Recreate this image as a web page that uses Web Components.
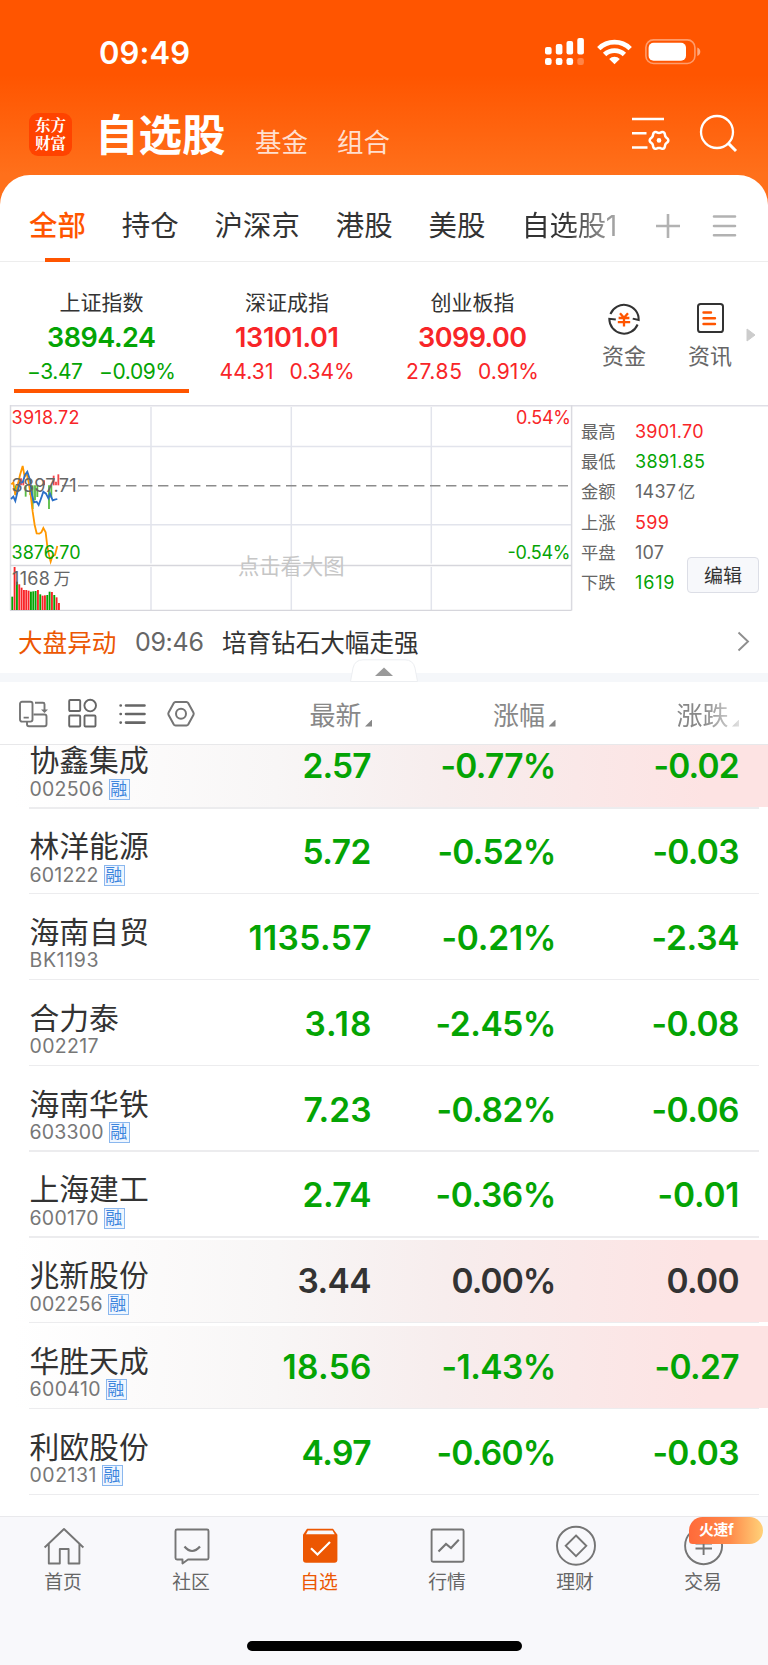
<!DOCTYPE html>
<html lang="zh-CN">
<head>
<meta charset="utf-8">
<title>自选股</title>
<style>
body {
    margin: 0;
    width: 768px;
    height: 1665px;
    overflow: hidden;
    background: #fff;
    color: #333;
    font-family: Inter, "Noto Sans CJK SC", sans-serif;
}
</style>
</head>
<body>
<stock-app></stock-app>

<script>
const UP = "#f82528"
const DOWN = "#04a404"

function define(name, html) {
    customElements.define(name, class extends HTMLElement {
        constructor() {
            super();
            this.attachShadow({mode: "open"});
        }

        connectedCallback() {
            this.shadowRoot.innerHTML = typeof html === "function" ? html(this) : html;
        }
    })
}

// Spreads its text over a given width with letter-spacing
class FitText extends HTMLElement {
    constructor() {
        super();
        this.attachShadow({mode: "open"});
        this.shadowRoot.innerHTML = `<style>
:host { display: inline-block; white-space: pre; }
</style><slot></slot>`
    }

    connectedCallback() {
        const target = Number(this.getAttribute("w"))
        if (!target) return
        const spacing = (target - this.getBoundingClientRect().width) / (this.textContent.length - 1)
        this.style.letterSpacing = `${spacing}px`
        this.style.marginRight = `${-spacing}px`
    }
}
customElements.define("fit-text", FitText)

function gear(cx, cy, r, depth) {
    const points = []
    for (let a = 0; a < 360; a += 6) {
        const t = a * Math.PI / 180
        const k = r + depth * Math.cos(6 * t)
        points.push(`${(cx + k * Math.cos(t)).toFixed(1)},${(cy + k * Math.sin(t)).toFixed(1)}`)
    }
    return `M${points.join("L")}Z`
}

const ICONS = {
    signal: [34, 28, `<g fill="#fff"><rect x="0" y="9" width="6.6" height="7.5" rx="2"/><rect x="10.8" y="6" width="6.6" height="10.5" rx="2"/><rect x="21.5" y="3" width="6.6" height="13.5" rx="2"/><rect x="32.3" y="0" width="6.6" height="16.5" rx="2"/><rect x="0" y="20" width="6.6" height="7" rx="2.2"/><rect x="10.8" y="20" width="6.6" height="7" rx="2.2"/><rect x="21.5" y="20" width="6.6" height="7" rx="2.2"/><rect x="32.3" y="20" width="6.6" height="7" rx="2.2" opacity=".28"/></g>`],
    wifi: [35, 26, `<g fill="none" stroke="#fff" stroke-width="4.8"><path d="M1.8 9.6a22.5 22.5 0 0 1 31.4 0"/><path d="M7.6 15.6a14.3 14.3 0 0 1 19.8 0"/></g><path d="M17.5 25.2l-5.3-5.2a7.6 7.6 0 0 1 10.6 0z" fill="#fff"/>`],
    battery: [56, 26, `<rect x=".9" y=".9" width="49" height="23.6" rx="7.6" fill="none" stroke="#fff" stroke-opacity=".42" stroke-width="1.6"/><rect x="3.6" y="3.7" width="37.4" height="18" rx="5" fill="#fff"/><path d="M52.3 8.6c4 1.6 4 6.8 0 8.4z" fill="#fff" fill-opacity=".5"/>`],
    filter: [38, 34, `<g fill="none" stroke="#fff" stroke-width="2.5"><path d="M0 2h32M0 16.2h14.5M0 30.6h15.5"/><path d="${gear(27, 23.4, 8.4, .9)}" stroke-linejoin="round"/></g><circle cx="27" cy="23.4" r="2.3" fill="#fff"/>`],
    search: [38, 38, `<g fill="none" stroke="#fff" stroke-width="2.3"><circle cx="17" cy="17" r="16"/><path d="M28.4 28.4l7.6 7.6" stroke-width="3"/></g>`],
    plus: [24, 24, `<path d="M0 12h24M12 0v24" stroke="#b2b2b2" stroke-width="2.6"/>`],
    menu: [23, 24, `<path d="M1 2.5h21M1 12h21M1 21.3h21" stroke="#b2b2b2" stroke-width="2.6" stroke-linecap="round"/>`],
    fund: [32, 32, `<g fill="none" stroke="#333" stroke-width="2"><path d="M2.4 11A14.7 14.7 0 0 1 30.7 17l-6-1.4M29.6 21.5A14.7 14.7 0 0 1 1.3 15.8l6.5.8"/></g><path d="M12 10.2l4 4.6 4-4.6M16 14.5v9M10.6 15h10.8M9.8 19.2h12.4" fill="none" stroke="#ff5500" stroke-width="2.3"/>`],
    news: [27, 30, `<rect x="1" y="1" width="25" height="28" rx="2.6" fill="none" stroke="#333" stroke-width="2"/><path d="M6.5 9.5h7.5M6.5 15.2h11.5M6.5 21h11.5" stroke="#ff5500" stroke-width="2.4" stroke-linecap="round"/>`],
    more: [10, 14, `<path d="M1 1v12l8-6z" fill="#ccc" stroke="#ccc" stroke-linejoin="round"/>`],
    chevron: [13, 21, `<path d="M1.5 1.5l9.5 9-9.5 9" fill="none" stroke="#8e8e8e" stroke-width="1.9"/>`],
    rotate: [29, 28, `<g fill="none" stroke="#757575" stroke-width="1.9"><rect x="1" y="1.8" width="12.5" height="19.8" rx="2"/><path d="M14.5 14.5h11a2 2 0 0 1 2 2v7.7a2 2 0 0 1-2 2h-15.5a2 2 0 0 1-2-2v-2.5M4.6 17.6h5.2M16 2.8h8a1.5 1.5 0 0 1 1.5 1.5v6"/></g><path d="M22 9.5h7l-3.5 3.5z" fill="#757575"/>`],
    grid: [29, 29, `<g fill="none" stroke="#666" stroke-width="1.9"><rect x="1.2" y="1" width="11" height="11" rx="1"/><circle cx="22.2" cy="6.6" r="5.8"/><rect x="1.2" y="16.5" width="11" height="11" rx="1"/><rect x="16.5" y="16.5" width="11" height="11" rx="1"/></g>`],
    list: [27, 24, `<path d="M7 3.5h18.5M7 12h18.5M7 20.6h18.5M1.6 3.5h.2M1.6 12h.2M1.6 20.6h.2" stroke="#666" stroke-width="2.6" stroke-linecap="round"/>`],
    hex: [28, 26, `<g fill="none" stroke="#757575" stroke-width="2"><path d="M8.5 1h11a2 2 0 0 1 1.7 1l5.2 9.6a2.5 2.5 0 0 1 0 2.4l-5.2 9.6a2 2 0 0 1-1.7 1h-11a2 2 0 0 1-1.7-1l-5.2-9.6a2.5 2.5 0 0 1 0-2.4l5.2-9.6a2 2 0 0 1 1.7-1z"/><circle cx="14" cy="12.8" r="5"/></g>`],
    home: [42, 42, `<g fill="none" stroke="#757575" stroke-width="1.9" stroke-linejoin="round"><path d="M1.6 21.5L21 3l19.4 18.5M5.8 18v19.5h11v-14.5h8.8v14.5h10.8v-19.5"/></g>`],
    chat: [42, 42, `<g fill="none" stroke="#757575" stroke-width="1.9" stroke-linejoin="round"><path d="M6 3.5h30a1.5 1.5 0 0 1 1.5 1.5v27a1.5 1.5 0 0 1-1.5 1.5h-19l-5.5 4v-4h-5.5a1.5 1.5 0 0 1-1.5-1.5v-27a1.5 1.5 0 0 1 1.5-1.5z"/><path d="M13.5 20.5q7.5 9 15.5 0" stroke-width="2.2"/></g>`],
    check: [42, 42, `<path d="M8 2.8h26l4.4 6v25a3 3 0 0 1-3 3h-28.4a3 3 0 0 1-3-3v-25z" fill="#ec5702"/><path d="M9 4.6h24.5l2.2 3.6h-28.7z" fill="#f8f8fb"/><path d="M12 22.2l6.5 6.3 12.5-12.5" fill="none" stroke="#fff" stroke-width="2.2"/>`],
    trend: [42, 42, `<g fill="none" stroke="#757575" stroke-width="1.9"><rect x="4.6" y="3.5" width="32" height="32.3" rx="1.5"/><path d="M11.5 25.5l7.5-7.5 5 4 7.8-8.2" stroke-width="2.1"/></g>`],
    wealth: [42, 42, `<g fill="none" stroke="#757575" stroke-width="1.9"><circle cx="21" cy="19.7" r="19"/><path d="M21 9.5l10.3 10.3L21 30.1 10.7 19.8z"/></g>`],
    trade: [42, 42, `<g fill="none" stroke="#757575" stroke-width="1.9"><circle cx="20.6" cy="19.7" r="18.5"/><path d="M14 10l6.6 6.5 6.6-6.5M12.5 17.5h16.5M12.5 22.5h16.5M20.6 16.5v12.5"/></g>`],
}

define("app-icon", el => {
    const [w, h, body] = ICONS[el.getAttribute("name")]
    return `<style>
:host { display: block; flex: none; }
svg { display: block; overflow: visible; }
</style><svg width="${w}" height="${h}" viewBox="0 0 ${w} ${h}">${body}</svg>`
})

define("status-bar", `<style>
:host {
    display: flex;
    align-items: center;
    height: 103px;
    padding: 0 67px 0 99px;
    color: #fff;
}
fit-text { font-size: 31px; font-weight: 600; margin-top: 2px; }
.icons { display: flex; align-items: center; margin-left: auto; }
app-icon[name=signal] { margin-right: 18px; }
app-icon[name=wifi] { margin-right: 13px; }
</style>
<fit-text w="91">09:49</fit-text>
<div class="icons"><app-icon name="signal"></app-icon><app-icon name="wifi"></app-icon><app-icon name="battery"></app-icon></div>`)

define("app-header", `<style>
:host {
    display: block;
    height: 215px;
    background: linear-gradient(#ff5500 0, #ff5500 75px, #ff701b 175px, #ff701b);
    color: #fff;
}
.bar { display: flex; height: 63px; padding: 0 30px 0 29px; align-items: center; }
.logo {
    width: 43px;
    height: 43px;
    border-radius: 9px;
    background: #ff4300;
    font: 700 15.5px/18px "Liberation Serif", "Noto Serif CJK SC", "Noto Sans CJK SC", serif;
    text-align: center;
    box-sizing: border-box;
    padding-top: 4px;
}
.logo span { display: block; }
.titles { display: flex; align-items: baseline; margin: -3px auto 0 23px; }
h1 { margin: 0 29.5px 0 0; font-size: 43.5px; font-weight: 700; transform: translateY(-1.5px); }
.sub { font-size: 26.5px; margin-right: 29px; color: #ffdfcf; }
app-icon[name=filter] { margin-right: 30px; }
.bar app-icon { margin-top: -1px; }
</style>
<status-bar></status-bar>
<div class="bar">
    <div class="logo"><span>东方</span><span>财富</span></div>
    <div class="titles">
        <h1>自选股</h1><span class="sub">基金</span><span class="sub">组合</span>
    </div>
    <app-icon name="filter"></app-icon><app-icon name="search"></app-icon>
</div>`)

define("group-tabs", `<style>
:host {
    display: flex;
    height: 86px;
    padding: 0 32px 0 29px;
    align-items: center;
    border-bottom: 1px solid #ededed;
    font-size: 28.4px;
}
.tab { flex: none; line-height: 86px; margin-top: 16px; margin-right: 36px; }
.active {
    color: #ff5500;
    font-weight: 500;
    background: linear-gradient(#ff5500, #ff5500) center 75px / 25px 4px no-repeat;
}
.last {
    margin-right: 0;
    color: transparent;
    background: linear-gradient(90deg, #333 45%, #aaa 100%);
    -webkit-background-clip: text;
    background-clip: text;
}
app-icon { margin-top: 15px; }
app-icon[name=plus] { margin-left: auto; margin-right: 33px; }
</style>
<span class="tab active">全部</span>
<span class="tab">持仓</span>
<span class="tab">沪深京</span>
<span class="tab">港股</span>
<span class="tab">美股</span>
<span class="tab last"><fit-text w="96">自选股1</fit-text></span>
<app-icon name="plus"></app-icon>
<app-icon name="menu"></app-icon>`)

define("index-quote", el => {
    const [name, value, diff, pct] = el.getAttribute("data").split(",")
    const [w1, w2, w3] = el.getAttribute("widths").split(",")
    return `<style>
:host {
    display: grid;
    flex: none;
    grid-template-rows: 34px 36px 32px;
    align-content: start;
    justify-items: center;
    width: 175px;
    height: 103px;
    padding-top: 23.5px;
    margin-right: 10.5px;
    border-bottom: 4px solid transparent;
    color: ${UP};
    line-height: 34px;
}
:host([down]) { color: ${DOWN}; }
:host([active]) { border-color: #ff5500; }
.name { color: #333; font-size: 21px; }
.value { font-size: 27px; font-weight: 600; line-height: 36px; }
.change { display: flex; gap: 16px; font-size: 21px; line-height: 32px; }
</style>
<span class="name">${name}</span>
<fit-text class="value" w="${w1}">${value}</fit-text>
<span class="change"><fit-text w="${w2}">${diff}</fit-text><fit-text w="${w3}">${pct}</fit-text></span>`
})

define("quick-link", `<style>
:host {
    display: flex;
    flex: none;
    flex-direction: column;
    align-items: center;
    width: 86px;
    padding-top: 41px;
    font-size: 22px;
    line-height: 30px;
    color: #666;
}
.icon { height: 38px; }
</style><div class="icon"><slot name="icon"></slot></div><slot></slot>`)

define("index-strip", `<style>
:host { display: flex; height: 142px; padding-left: 14px; }
.more { padding-top: 66px; margin-left: -7px; }
quick-link:first-of-type { margin-left: 10.5px; }
</style>
<index-quote active down data="上证指数,3894.24,−3.47,−0.09%" widths="109,56,77"></index-quote>
<index-quote data="深证成指,13101.01,44.31,0.34%" widths="104,54,65"></index-quote>
<index-quote data="创业板指,3099.00,27.85,0.91%" widths="109,56,61"></index-quote>
<quick-link><app-icon slot="icon" name="fund"></app-icon>资金</quick-link>
<quick-link><app-icon slot="icon" name="news"></app-icon>资讯</quick-link>
<div class="more"><app-icon name="more"></app-icon></div>`)

// Volume bars: top edge and colour, 7 units apart
const VOLUME = "605g 516r 560g 568r 578r 585r 585r 587r 590g 589g 588g 585r 598g 602r 601r 600g 590g 591r 600g 607r 624r".split(" ")
const STRENGTH = [[47, 300], [56, 262], [63, 250], [70, 258], [77, 305], [91, 300], [98, 342], [105, 316], [112, 306], [132, 256], [147, 342], [154, 308], [161, 242], [168, 260], [175, 238]]

define("minute-chart", () => {
    const volume = VOLUME.map((v, i) => {
        const y = parseInt(v)
        return `<rect x="${34 + i * 7}" y="${y}" width="5.6" height="${645 - y}" fill="${v.endsWith("g") ? DOWN : UP}"/>`
    }).join("")
    const strength = STRENGTH.map(([x, y]) =>
        `<path d="M${x} 271V${y}" stroke="${y > 271 ? "#59bd45" : "#f4454a"}" stroke-width="5.5"/>`
    ).join("")
    return `<style>
:host { display: block; flex: none; width: 573px; height: 207px; }
svg { display: block; }
text { font-size: 18px; }
</style>
<svg width="573" height="207" viewBox="0 404 573 207">
    <g fill="none" stroke="#e2e4ec" stroke-width="1.5">
        <path d="M11 446.5H571M11 524.7H571M151 407V563.5M291.3 407V563.5M431.3 407V563.5M151 567V610M291.3 567V610M431.3 567V610"/>
        <path d="M571.6 405V610.5M10.5 405V610.5" stroke="#dadae0"/>
        <path d="M10 565.5H571.5M10 610.4H571.5" stroke="#d6d6dc"/>
    </g>
    <text x="238" y="573.5" fill="#c6c6c6" style="font-size:21.3px">点击看大图</text>
    <g transform="translate(0 395) scale(.33333)" fill="none">
        ${strength}${volume}
        <path d="M34 268L40 262 46 300 55 262 60 240 68 213 74 245 80 235 86 262 92 300 98 350 104 390 110 415 118 416 124 412 130 399 137 412 142 455 147 480 152 500 157 484 165 480 172 453" stroke="#ff9800" stroke-width="5.4"/>
        <path d="M33 312L40 305 46 318 55 280 60 262 68 262 75 240 82 230 90 255 96 300 102 322 110 320 116 330 124 308 130 290 138 296 145 310 150 296 158 316 164 314 172 312" stroke="#2b6fc8" stroke-width="5.4"/>
    </g>
    <path d="M62 485.7H568" stroke="#8c8c8c" stroke-width="1.6" stroke-dasharray="10.4 5.6"/>
    <g fill="#666">
        <text x="11.5" y="491.5" textLength="65">3897.71</text>
        <text x="12" y="585" textLength="38">1168</text><text x="53.5" y="585" style="font-size:17px">万</text>
    </g>
    <g fill="${UP}">
        <text x="11.5" y="423.5" textLength="68">3918.72</text>
        <text x="516" y="423.5" textLength="55">0.54%</text>
    </g>
    <g fill="${DOWN}">
        <text x="11.5" y="559" textLength="69">3876.70</text>
        <text x="507.5" y="559" textLength="63">-0.54%</text>
    </g>
</svg>`
})

define("market-stats", `<style>
:host {
    display: grid;
    grid-template-columns: 54px 1fr;
    grid-auto-rows: 30.4px;
    align-content: start;
    flex: 1;
    padding: 12.5px 0 0 8px;
    font-size: 18px;
    line-height: 30.4px;
    color: #666;
    position: relative;
}
.up { color: ${UP}; }
.down { color: ${DOWN}; }
.label { font-size: 17.3px; }
.unit { font-size: 17.3px; margin-left: 2px; }
button {
    position: absolute;
    left: 114px;
    top: 153px;
    width: 72px;
    height: 36px;
    padding: 0 0 2px;
    border: 1px solid #dcdee6;
    border-radius: 4px;
    background: #f7f8fb;
    color: #333;
    font: 19px Inter, "Noto Sans CJK SC", sans-serif;
}
</style>
<span class="label">最高</span><span class="up"><fit-text w="68.5">3901.70</fit-text></span>
<span class="label">最低</span><span class="down"><fit-text w="70">3891.85</fit-text></span>
<span class="label">金额</span><span><fit-text w="41">1437</fit-text><span class="unit">亿</span></span>
<span class="label">上涨</span><span class="up"><fit-text w="34">599</fit-text></span>
<span class="label">平盘</span><span><fit-text w="29">107</fit-text></span>
<span class="label">下跌</span><span class="down"><fit-text w="39.5">1619</fit-text></span>
<button>编辑</button>`)

define("market-panel", `<style>
:host { display: flex; height: 207px; background: linear-gradient(#dfdfe6, #dfdfe6) 10px .5px / 100% 1.5px no-repeat; }
</style><minute-chart></minute-chart><market-stats></market-stats>`)

define("news-line", `<style>
:host {
    display: flex;
    align-items: center;
    height: 60px;
    padding: 0 18px 2px 18px;
    font-size: 24.6px;
    position: relative;
    border-bottom: 9px solid #f5f7fa;
}
.tag { color: #ec5702; }
.time { color: #666; margin: 2px 18px 0 18.5px; font-size: 25px; }
app-icon { margin-left: auto; }
.handle { position: absolute; left: 350px; top: 47.5px; }
</style>
<span class="tag">大盘异动</span>
<span class="time"><fit-text w="69">09:46</fit-text></span>
<span>培育钻石大幅走强</span>
<app-icon name="chevron"></app-icon>
<svg class="handle" width="68" height="24"><path d="M.5 22.5L3 9Q5 .8 13 .8H55Q63 .8 65 9L67.5 22.5Z" fill="#fff" stroke="#eceef1" stroke-width="1"/><path d="M25 17L34 8.5 43 17Z" fill="#999"/></svg>`)

define("list-toolbar", `<style>
:host {
    display: flex;
    align-items: center;
    height: 62px;
    padding-left: 19px;
    border-bottom: 1px solid #e8e8ea;
    color: #888;
    font-size: 26px;
}
app-icon { margin-top: 1px; }
app-icon[name=grid] { margin-left: 20px; }
app-icon[name=list] { margin-left: 21.5px; }
app-icon[name=hex] { margin-left: 21.5px; }
.col { display: flex; align-items: center; width: 183.5px; justify-content: flex-end; }
.col i { width: 7px; height: 7px; margin: 20px 0 0 3.5px; background: #888; clip-path: polygon(100% 0, 100% 100%, 0 100%); }
.first { margin-left: -6.5px; }
.last { -webkit-mask: linear-gradient(90deg, #000 80%, #0004); mask: linear-gradient(90deg, #000 80%, #0004); }
</style>
<app-icon name="rotate"></app-icon><app-icon name="grid"></app-icon><app-icon name="list"></app-icon><app-icon name="hex"></app-icon>
<span class="col first">最新<i></i></span>
<span class="col">涨幅<i></i></span>
<span class="col last">涨跌<i></i></span>`)

// name, code, code width, margin trading, price, change %, change, widths of the three values
const STOCKS = [
    ["协鑫集成", "002506", 74, true, "2.57", "-0.77%", "-0.02", 69, 116, 86, "hot scrolled"],
    ["林洋能源", "601222", 69, true, "5.72", "-0.52%", "-0.03", 69, 119, 87],
    ["海南自贸", "BK1193", 69, false, "1135.57", "-0.21%", "-2.34", 123, 115, 88],
    ["合力泰", "002217", 69, false, "3.18", "-2.45%", "-0.08", 67, 121, 88],
    ["海南华铁", "603300", 74, true, "7.23", "-0.82%", "-0.06", 68, 120, 88],
    ["上海建工", "600170", 69, true, "2.74", "-0.36%", "-0.01", 69, 121, 82],
    ["兆新股份", "002256", 73, true, "3.44", "0.00%", "0.00", 74, 105, 73, "hot flat"],
    ["华胜天成", "600410", 71, true, "18.56", "-1.43%", "-0.27", 89, 115, 85, "hot"],
    ["利欧股份", "002131", 67, true, "4.97", "-0.60%", "-0.03", 70, 120, 87],
]

define("stock-row", el => {
    const [name, code, codeWidth, margin, price, pct, diff, w1, w2, w3] = STOCKS[el.getAttribute("index")]
    return `<style>
:host {
    display: block;
    flex: none;
    height: 85.8px;
    color: ${DOWN};
}
:host(.flat) { color: #333; }
.band {
    display: grid;
    grid-template-columns: 189px 153px 185px 183px;
    height: 81.8px;
    padding-left: 29.5px;
    border: solid #fff;
    border-width: 2px 0 0;
}
:host(.hot) .band { background: linear-gradient(92deg, #fff 2%, #f8f6f6 36%, #f7eded 58%, #fde3e3 92%); }
.name { display: block; color: #333; font-size: 29.8px; line-height: 40px; margin-top: 15px; }
.code { display: flex; align-items: center; gap: 5px; height: 22px; margin-top: -2px; color: #777; font-size: 19.5px; line-height: 21px; }
.code b {
    box-sizing: border-box;
    width: 21px;
    height: 21px;
    border: 1px solid #8ab7ee;
    background: #eff6ff;
    color: #3d85dd;
    font-size: 17px;
    font-weight: 400;
    line-height: 19px;
    text-align: center;
    text-indent: -.5px;
}
.num { text-align: right; font-size: 33.5px; font-weight: 600; line-height: 83px; }
hr { margin: 0 9px 0 29px; border: 0; height: 1.5px; background: #ececee; }
/* the row that has partly gone under the toolbar */
:host(.scrolled) { height: 64.1px; }
:host(.scrolled) .band { height: 62.1px; border: 0; }
:host(.scrolled) .name { margin-top: -4.7px; }
:host(.scrolled) .num { line-height: 43.6px; }
</style>
<div class="band">
    <div><span class="name">${name}</span><span class="code"><fit-text w="${codeWidth}">${code}</fit-text>${margin ? "<b>融</b>" : ""}</span></div>
    <span class="num"><fit-text w="${w1}">${price}</fit-text></span>
    <span class="num"><fit-text w="${w2}">${pct}</fit-text></span>
    <span class="num"><fit-text w="${w3}">${diff}</fit-text></span>
</div>
<hr>`
})

define("stock-list", `<style>
:host {
    display: flex;
    flex-direction: column;
    justify-content: flex-end;
    height: 750.5px;
    padding-bottom: 20.5px;
}
</style>${STOCKS.map((s, i) => `<stock-row index="${i}" class="${s[10] || ""}"></stock-row>`).join("")}`)

define("nav-item", `<style>
:host {
    display: flex;
    flex-direction: column;
    align-items: center;
    flex: 1;
    position: relative;
    padding-top: 8.5px;
    color: #666;
    font-size: 18.8px;
    line-height: 30px;
}
:host([active]) { color: #ec5702; }
.label { margin-left: -2px; }
</style><slot name="icon"></slot><span class="label"><slot></slot></span><slot name="badge"></slot>`)

define("promo-badge", `<style>
:host {
    display: block;
    position: absolute;
    left: 49px;
    top: 0;
    width: 64px;
    height: 27px;
    padding-left: 10px;
    border-radius: 14px 14px 14px 4px;
    background: linear-gradient(90deg, #ff6a3a, #ff8a4a 55%, #ffd279);
    color: #fff;
    font-size: 14.8px;
    font-weight: 700;
    line-height: 27px;
    letter-spacing: -.3px;
}
</style><slot></slot>`)

define("tab-bar", `<style>
:host {
    display: block;
    flex: none;
    height: 148px;
    border-top: 1px solid #e9e9ec;
    background: #f8f8fb;
}
nav { display: flex; height: 124px; }
.home { width: 275px; height: 9.5px; margin: 0 auto; border-radius: 5px; background: #000; }
</style>
<nav>
    <nav-item><app-icon slot="icon" name="home"></app-icon>首页</nav-item>
    <nav-item><app-icon slot="icon" name="chat"></app-icon>社区</nav-item>
    <nav-item active><app-icon slot="icon" name="check"></app-icon>自选</nav-item>
    <nav-item><app-icon slot="icon" name="trend"></app-icon>行情</nav-item>
    <nav-item><app-icon slot="icon" name="wealth"></app-icon>理财</nav-item>
    <nav-item><app-icon slot="icon" name="trade"></app-icon>交易<promo-badge slot="badge">火速f</promo-badge></nav-item>
</nav>
<div class="home"></div>`)

define("stock-app", `<style>
:host { display: flex; flex-direction: column; height: 1665px; }
app-header, main { flex: none; }
main {
    margin-top: -40px;
    border-radius: 30px 30px 0 0;
    background: #fff;
}
</style>
<app-header></app-header>
<main>
    <group-tabs></group-tabs>
    <index-strip></index-strip>
    <market-panel></market-panel>
    <news-line></news-line>
    <list-toolbar></list-toolbar>
    <stock-list></stock-list>
</main>
<tab-bar></tab-bar>`)
</script>
</body>
</html>
